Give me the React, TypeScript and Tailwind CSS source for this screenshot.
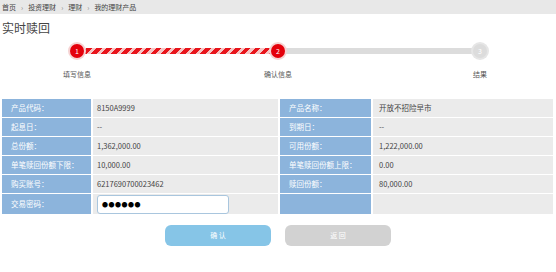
import React from "react";

const rows = [
    ["产品代码：", "8150A9999", "产品名称：", "开放不招险早市"],
    ["起息日：", "--", "到期日：", "--"],
    ["总份额：", "1,362,000.00", "可用份额：", "1,222,000.00"],
    ["单笔赎回份额下限：", "10,000.00", "单笔赎回份额上限：", "0.00"],
    ["购买账号：", "6217690700023462", "赎回份额：", "80,000.00"],
];

const crumbs = ["首页", "投资理财", "理财", "我的理财产品"];

const App = () => {
    return (
        <main className="w-[556px] h-[272px] bg-white text-[#333] font-['Noto_Sans_CJK_SC',sans-serif] overflow-hidden">
            {/* Breadcrumb */}
            <div className="h-[14px] bg-[#e8e8e8] flex items-center px-[2px] text-[7px] text-[#444]">
                {crumbs.map((c, i) => (
                    <span key={c} className="flex items-center">
                        {i > 0 && <span className="mx-[5px] text-[#888]">›</span>}
                        {c}
                    </span>
                ))}
            </div>

            {/* Title */}
            <h1 className="mt-[6px] px-[2px] text-[12px] leading-[16px] text-[#444]">实时赎回</h1>

            {/* Steps */}
            <div className="relative h-[48px] mt-[2px]">
                <div className="absolute left-[77px] top-[10px] w-[403px] h-[6px] bg-[#dcdcdc]" />
                <div className="absolute left-[77px] top-[10px] w-[201px] h-[6px] bg-[repeating-linear-gradient(135deg,#e8141b_0_4px,#f7c6c6_4px_7px)]" />
                <div className="absolute left-[68px] top-[4px] w-[18px] h-[18px] rounded-full bg-[#f6d3d3] flex items-center justify-center">
                    <div className="w-[14px] h-[14px] rounded-full bg-[#e4000b] text-white text-[7px] flex items-center justify-center">1</div>
                </div>
                <div className="absolute left-[269px] top-[4px] w-[18px] h-[18px] rounded-full bg-[#f6d3d3] flex items-center justify-center">
                    <div className="w-[14px] h-[14px] rounded-full bg-[#e4000b] text-white text-[7px] flex items-center justify-center">2</div>
                </div>
                <div className="absolute left-[471px] top-[4px] w-[18px] h-[18px] rounded-full bg-[#e6e6e6] flex items-center justify-center">
                    <div className="w-[14px] h-[14px] rounded-full bg-[#dcdcdc] text-white text-[7px] flex items-center justify-center">3</div>
                </div>
                <span className="absolute left-[57px] top-[31px] w-[40px] text-center text-[7px] text-[#555]">填写信息</span>
                <span className="absolute left-[258px] top-[31px] w-[40px] text-center text-[7px] text-[#555]">确认信息</span>
                <span className="absolute left-[460px] top-[31px] w-[40px] text-center text-[7px] text-[#555]">结果</span>
            </div>

            {/* Table */}
            <div className="mx-[2px] mt-[13px] w-[551px] flex flex-col gap-[1px] text-[7.5px]">
                {rows.map((r) => (
                    <div key={r[0]} className="flex h-[18px] gap-[2px]">
                        <div className="w-[89px] bg-[#8cb4dc] text-white flex items-center pl-[9px]">{r[0]}</div>
                        <div className="w-[185px] bg-[#ebebeb] flex items-center pl-[4px] text-[#444]">{r[1]}</div>
                        <div className="w-[91px] bg-[#8cb4dc] text-white flex items-center pl-[9px]">{r[2]}</div>
                        <div className="flex-1 bg-[#ebebeb] flex items-center pl-[6px] text-[#444]">{r[3]}</div>
                    </div>
                ))}
                <div className="flex h-[20px] gap-[2px]">
                    <div className="w-[89px] bg-[#8cb4dc] text-white flex items-center pl-[9px]">交易密码：</div>
                    <div className="w-[185px] bg-[#ebebeb] flex items-center pl-[4px]">
                        <div className="w-[132px] h-[19px] bg-white border border-[#a9c6de] rounded-[3px] flex items-center pl-[4px] text-[6px] tracking-[0.5px] text-black">●●●●●●</div>
                    </div>
                    <div className="w-[91px] bg-[#8cb4dc]" />
                    <div className="flex-1 bg-[#ebebeb]" />
                </div>
            </div>

            {/* Buttons */}
            <div className="flex justify-center gap-[14px] mt-[11px] text-[7px] text-white">
                <button className="w-[106px] h-[21px] rounded-[6px] bg-[#86c5e7]">确 认</button>
                <button className="w-[106px] h-[21px] rounded-[6px] bg-[#d2d2d2]">返 回</button>
            </div>
        </main>
    );
};

export default App;
